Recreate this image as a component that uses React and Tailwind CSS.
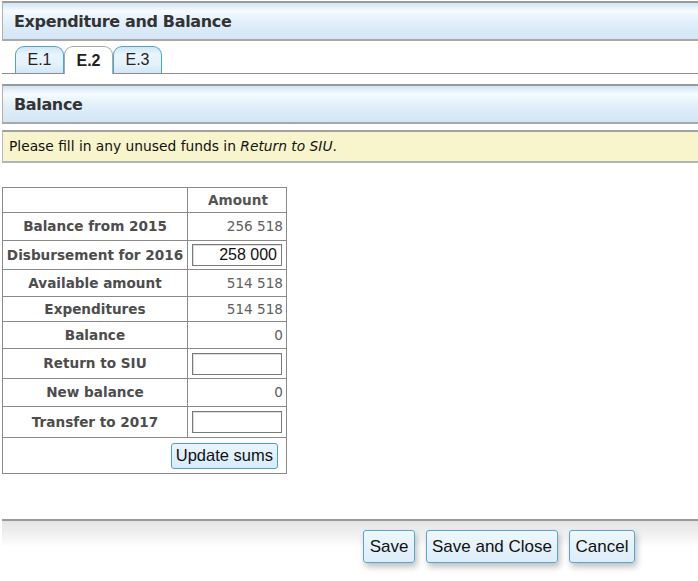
import React from "react";

const hdr =
  "bg-[linear-gradient(to_bottom,#d3e4f3_0%,#e4f0fa_12%,#f6fbff_22%,#e6f2fc_45%,#d9eaf8_75%,#d4e6f6_100%)]";

function Header({ children }) {
  return (
    <div
      className={`ml-[2px] h-[40px] border-t-2 border-b-2 border-l border-t-[#9a9a9a] border-b-[#a8a8a8] border-l-[#b0b0b0] ${hdr} flex items-center pl-[11px]`}
    >
      <span className="font-['DejaVu_Sans',sans-serif] font-bold text-[16px] text-[#333] tracking-[-0.35px] pt-[1px]">
        {children}
      </span>
    </div>
  );
}

function Tab({ label, active }) {
  if (active)
    return (
      <div className="w-[49px] h-[28px] -mb-px rounded-t-[9px] border border-b-0 border-[#a9a9a9] bg-white flex items-center justify-center font-['Liberation_Sans',sans-serif] font-bold text-[16px] text-[#222] relative z-10">
        {label}
      </div>
    );
  return (
    <div className="w-[49px] h-[27px] rounded-t-[9px] border border-b-0 border-[#4ca3cf] bg-[linear-gradient(to_bottom,#cfe6f5_0%,#eaf5fc_30%,#e3f1fb_70%,#cfe7f7_100%)] flex items-center justify-center font-['Liberation_Sans',sans-serif] text-[16px] text-[#222]">
      {label}
    </div>
  );
}

const rows = [
  ["Balance from 2015", "256 518", 28],
  ["Disbursement for 2016", "input:258 000", 29],
  ["Available amount", "514 518", 27],
  ["Expenditures", "514 518", 25],
  ["Balance", "0", 27],
  ["Return to SIU", "input:", 30],
  ["New balance", "0", 28],
  ["Transfer to 2017", "input:", 31],
];

const buttons = [
  ["Save", "w-[52px]"],
  ["Save and Close", "w-[132px]"],
  ["Cancel", "w-[66px]"],
];

export default function App() {
  return (
    <div className="w-[698px] h-[581px] bg-white overflow-hidden relative font-['DejaVu_Sans',sans-serif]">
      <div className="h-[1px]" />
      <Header>Expenditure and Balance</Header>
      <div className="ml-[2px] h-[33px] border-b border-[#8c8c8c] flex items-end pl-[13px]">
        <Tab label="E.1" />
        <Tab label="E.2" active />
        <Tab label="E.3" />
      </div>
      <div className="h-[10px]" />
      <Header>Balance</Header>
      <div className="h-[6px]" />
      <div className="ml-[2px] h-[33px] border-y-2 border-l border-t-[#a0a0a0] border-b-[#b4b4b4] border-l-[#b8b8b8] bg-[#f8f4cc] flex items-center pl-[6px] text-[13.8px] text-[#111]">
        <span>
          Please fill in any unused funds in <i>Return to SIU</i>.
        </span>
      </div>
      <div className="h-[24px]" />
      <table className="ml-[2px] border-collapse text-[13.6px]">
        <tbody>
          <tr className="h-[25px]">
            <td className="w-[185px] border border-[#8a8a8a]"></td>
            <td className="w-[99px] border border-[#8a8a8a] text-center font-bold text-[#555] pl-[2px]">
              Amount
            </td>
          </tr>
          {rows.map(([label, val, h]) => (
            <tr key={label} style={{ height: h }}>
              <td className="border border-[#8a8a8a] text-center font-bold text-[#4d4d4d] whitespace-nowrap px-0">
                {label}
              </td>
              <td className="border border-[#8a8a8a] text-right text-[#606060] pr-[3px]">
                {val.startsWith("input:") ? (
                  <div className="flex justify-end pr-[1px]">
                    <div className="w-[90px] h-[22px] border border-[#7a7a7a] shadow-[inset_1px_1px_0_#ddd] bg-white flex items-center justify-end pr-[4px] font-['Liberation_Sans',sans-serif] text-[16px] text-[#111]">
                      {val.slice(6)}
                    </div>
                  </div>
                ) : (
                  val
                )}
              </td>
            </tr>
          ))}
          <tr className="h-[36px]">
            <td colSpan={2} className="border border-[#8a8a8a] text-right pr-[8px]">
              <button className="h-[26px] px-[4px] rounded-[3px] border border-[#4e9fcc] bg-[linear-gradient(to_bottom,#eaf5fd,#d7ecfa)] font-['Liberation_Sans',sans-serif] text-[16.5px] text-[#111] leading-none">
                Update sums
              </button>
            </td>
          </tr>
        </tbody>
      </table>
      <div className="h-[45px]" />
      <div className="ml-[2px] border-t-2 border-[#9a9a9a] h-[28px] bg-[linear-gradient(to_bottom,#e4e4e4,#f3f3f3_60%,#ffffff)]" />
      <div className="absolute left-[363px] top-[530px] flex gap-[11px]">
        {buttons.map(([b, w]) => (
          <button
            key={b}
            className={`${w} h-[33px] p-0 flex items-center justify-center rounded-[3px] border border-[#5aa5cf] bg-[linear-gradient(to_bottom,#eef7fd,#dcedfa)] shadow-[2px_4px_6px_rgba(0,0,0,0.25)] font-['Liberation_Sans',sans-serif] text-[17px] text-[#111] leading-none`}
          >
            {b}
          </button>
        ))}
      </div>
    </div>
  );
}
